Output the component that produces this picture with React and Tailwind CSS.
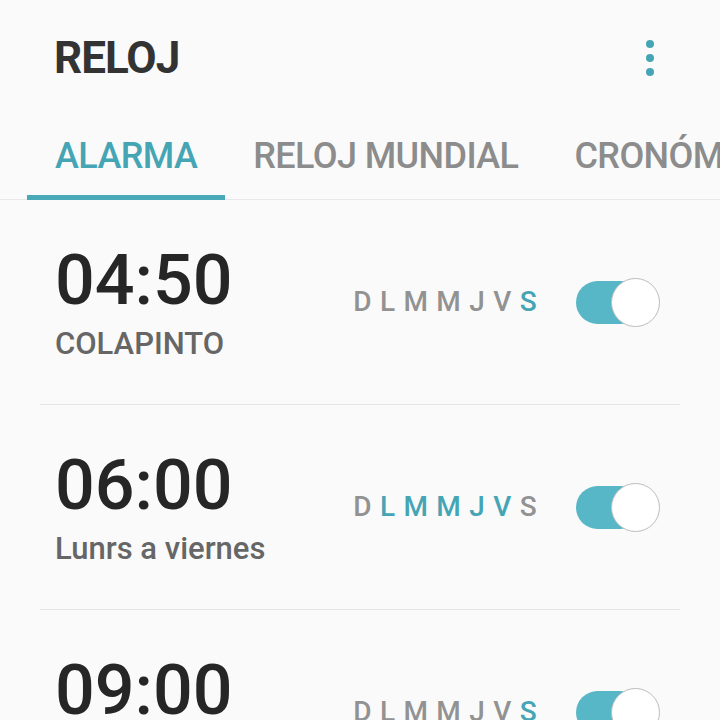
import { useState } from "react";

const DAYS = ["D", "L", "M", "M", "J", "V", "S"];

function Toggle({ on }) {
  return (
    <div className="relative w-[84px] h-[49px] flex items-center">
      <div
        className={`w-[66px] h-[43px] rounded-full ${on ? "bg-[#58b7c7]" : "bg-[#cfcfcf]"}`}
      />
      <div className="absolute right-0 top-0 w-[49px] h-[49px] rounded-full bg-white border-[1.5px] border-[#bdbdbd]" />
    </div>
  );
}

function AlarmRow({ time, label, active, on, first }) {
  return (
    <div>
      {!first && <div className="mx-[40px] h-px bg-[#e5e5e5]" />}
      <div className="h-[204px] flex items-center pl-[55px] pr-[60px]">
        <div className="flex-1 flex flex-col">
          <div className="text-[70px] leading-none font-medium text-[#262626]">
            {time}
          </div>
          <div className="mt-[13px] text-[31px] leading-none font-medium text-[#666666] whitespace-pre">
            {label}
          </div>
        </div>
        <div className="mr-[31px] text-[28px] font-medium leading-none tracking-[8.4px]">
          {DAYS.map((d, i) => (
            <span
              key={i}
              className={active.includes(i) ? "text-[#45a5b5]" : "text-[#929292]"}
            >
              {d}
            </span>
          ))}
        </div>
        <Toggle on={on} />
      </div>
    </div>
  );
}

export default function App() {
  const [tab] = useState(0);
  const tabs = ["ALARMA", "RELOJ MUNDIAL", "CRONÓMETRO"];

  return (
    <div
      className="w-[720px] h-[720px] overflow-hidden bg-[#fafafa]"
      style={{ fontFamily: "Roboto, 'Noto Sans', sans-serif" }}
    >
      {/* barra superior */}
      <div className="h-[116px] flex items-center justify-between pl-[54px] pr-[66px]">
        <h1 className="text-[44px] font-bold text-[#333333] tracking-[-1px] leading-none">
          RELOJ
        </h1>
        <div className="flex flex-col gap-[6px]">
          <span className="w-[8px] h-[8px] rounded-full bg-[#45a5b5]" />
          <span className="w-[8px] h-[8px] rounded-full bg-[#45a5b5]" />
          <span className="w-[8px] h-[8px] rounded-full bg-[#45a5b5]" />
        </div>
      </div>

      {/* pestañas */}
      <div className="flex pl-[27px] border-b border-[#e8e8e8] whitespace-nowrap">
        {tabs.map((t, i) => (
          <div
            key={t}
            className={`h-[84px] flex items-center px-[28px] border-b-[5px] -mb-px ${
              tab === i ? "border-[#4aa9b8] text-[#45a5b5]" : "border-transparent text-[#8c8c8c]"
            }`}
          >
            <span className="text-[36px] font-medium leading-none tracking-[-0.6px]">{t}</span>
          </div>
        ))}
      </div>

      {/* alarmas */}
      <AlarmRow first time="04:50" label="COLAPINTO" active={[6]} on />
      <AlarmRow time="06:00" label="Lunrs a viernes" active={[1, 2, 3, 4, 5]} on />
      <AlarmRow time="09:00" label=" " active={[6]} on />
    </div>
  );
}
